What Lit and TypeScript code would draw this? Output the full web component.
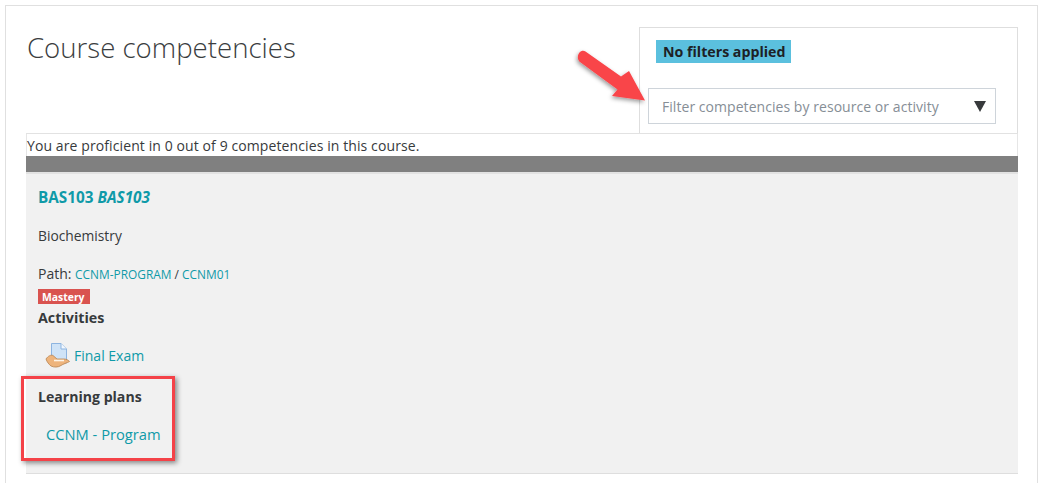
import { LitElement, html, css } from "lit";
import { customElement } from "lit/decorators.js";

@customElement("app-root")
export class AppRoot extends LitElement {
  static styles = css`
    :host {
      display: block;
      position: relative;
      width: 1043px;
      height: 483px;
      overflow: hidden;
      background: #fff;
      font-family: "Open Sans", "Noto Sans", sans-serif;
      font-size: 14px;
      color: #373a3c;
    }
    .page {
      box-sizing: border-box;
      margin: 5px 0 0 5px;
      width: 1033px;
      height: 478px;
      border: 1px solid #e0e0e0;
      border-bottom: 0;
      padding: 21px 19px 0 20px;
    }
    .head {
      display: flex;
      justify-content: space-between;
      height: 106px;
    }
    h2 {
      margin: 0 0 0 1px;
      padding-top: 2px;
      font-size: 27.6px;
      line-height: 36px;
      font-weight: 300;
      color: #3a3d40;
    }
    .filter {
      box-sizing: border-box;
      width: 379px;
      height: 106px;
      border: 1px solid #dedede;
      border-bottom: 0;
      padding: 12px 21px 0 8px;
    }
    .badge {
      display: block;
      width: fit-content;
      height: 23px;
      margin-left: 8px;
      padding: 0 6px 0 7px;
      background: #5bc0de;
      color: #1d2125;
      font-weight: 700;
      font-size: 14.2px;
      line-height: 23px;
    }
    .select {
      box-sizing: border-box;
      display: flex;
      align-items: center;
      justify-content: space-between;
      height: 36px;
      margin-top: 25px;
      padding: 0 9px 0 13px;
      border: 1px solid #ced4da;
      color: #868e96;
      font-size: 14px;
      letter-spacing: 0.05px;
    }
    .caret {
      width: 0;
      height: 0;
      border-left: 6px solid transparent;
      border-right: 6px solid transparent;
      border-top: 11px solid #373a3c;
    }
    .table {
      width: 992px;
      border-top: 1px solid #e2e2e2;
      box-sizing: border-box;
    }
    .summary {
      height: 22px;
      line-height: 23px;
      border-left: 1px solid #e6e6e6;
      border-right: 1px solid #e6e6e6;
      letter-spacing: 0.1px;
    }
    .bar {
      height: 16px;
      background: #808080;
      border-bottom: 2px solid #e2e2e2;
    }
    .panel {
      box-sizing: border-box;
      height: 300px;
      padding: 0 0 0 12px;
      background: #f1f1f1;
      border-bottom: 1px solid #dedede;
      display: flex;
      flex-direction: column;
      align-items: flex-start;
    }
    a {
      color: #0f9aa8;
      text-decoration: none;
    }
    .code {
      margin-top: 13px;
      font-size: 15.3px;
      line-height: 20px;
      font-weight: 700;
    }
    .desc {
      margin-top: 19px;
      line-height: 20px;
      font-size: 13.8px;
    }
    .path {
      margin-top: 18px;
      line-height: 20px;
    }
    .path .links {
      font-size: 11.9px;
    }
    .mastery {
      margin-top: 5px;
      height: 15px;
      padding: 0 5px 0 4px;
      background: #d9534f;
      color: #fff;
      font-size: 10.4px;
      font-weight: 700;
      line-height: 16px;
    }
    .label {
      font-weight: 700;
      line-height: 20px;
      font-size: 14.3px;
    }
    .label.act {
      margin-top: 4px;
    }
    .activity {
      display: flex;
      align-items: center;
      gap: 4px;
      margin: 14px 0 0 7px;
      height: 26px;
      font-size: 14px;
    }
    .label.plans {
      margin-top: 19px;
      font-size: 14.1px;
    }
    .plan {
      margin: 17px 0 0 8px;
      line-height: 20px;
      font-size: 14.7px;
    }
    .note-box {
      position: absolute;
      box-sizing: border-box;
      left: 21px;
      top: 376px;
      width: 154px;
      height: 85px;
      border: 3px solid #f44248;
      box-shadow: 2px 2px 5px rgba(0, 0, 0, 0.45);
    }
    .arrow {
      position: absolute;
      left: 570px;
      top: 40px;
    }
  `;

  render() {
    return html`
      <div class="page">
        <div class="head">
          <h2>Course competencies</h2>
          <div class="filter">
            <span class="badge">No filters applied</span>
            <div class="select">
              <span>Filter competencies by resource or activity</span>
              <span class="caret"></span>
            </div>
          </div>
        </div>
        <div class="table">
          <div class="summary">You are proficient in 0 out of 9 competencies in this course.</div>
          <div class="bar"></div>
          <div class="panel">
            <a class="code" href="#">BAS103 <em>BAS103</em></a>
            <div class="desc">Biochemistry</div>
            <div class="path">
              Path:
              <span class="links"><a href="#">CCNM-PROGRAM</a> / <a href="#">CCNM01</a></span>
            </div>
            <span class="mastery">Mastery</span>
            <div class="label act">Activities</div>
            <div class="activity">
              <svg width="25" height="26" viewBox="0 0 25 26">
                <path d="M6.5 1.5H16L21.5 7V21H6.5Z" fill="#cfe3f7" stroke="#8db4e0" />
                <path d="M16 1.5V7H21.5" fill="#f2f8fe" stroke="#8db4e0" />
                <path d="M1 17C3 14 6 12.5 8 13.5L12 17H19C21 17 23.5 18 24.5 19.5C22 21 18 22 16 23.5C13 25.5 9 25.5 6 24C4 22.5 2 20 1 17Z" fill="#eeb47c" stroke="#b8834f" stroke-width=".8" />
                <path d="M9 18.5H19" stroke="#fdf4e8" stroke-width="1.6" />
              </svg>
              <a href="#">Final Exam</a>
            </div>
            <div class="label plans">Learning plans</div>
            <a class="plan" href="#">CCNM - Program</a>
          </div>
        </div>
      </div>
      <div class="note-box"></div>
      <svg class="arrow" width="90" height="70" viewBox="0 0 90 70">
        <defs>
          <filter id="s" x="-20%" y="-20%" width="150%" height="150%">
            <feDropShadow dx="-1" dy="2" stdDeviation="2" flood-color="#000" flood-opacity=".4" />
          </filter>
        </defs>
        <path d="M15.5 11.5L51 36.5L59 31L75 60.5L42 56L47.5 49.5L10 22C7.5 20 7 15.5 9.5 12.5C11 10.8 13.5 10.3 15.5 11.5Z" fill="#f94449" filter="url(#s)" />
      </svg>
    `;
  }
}
